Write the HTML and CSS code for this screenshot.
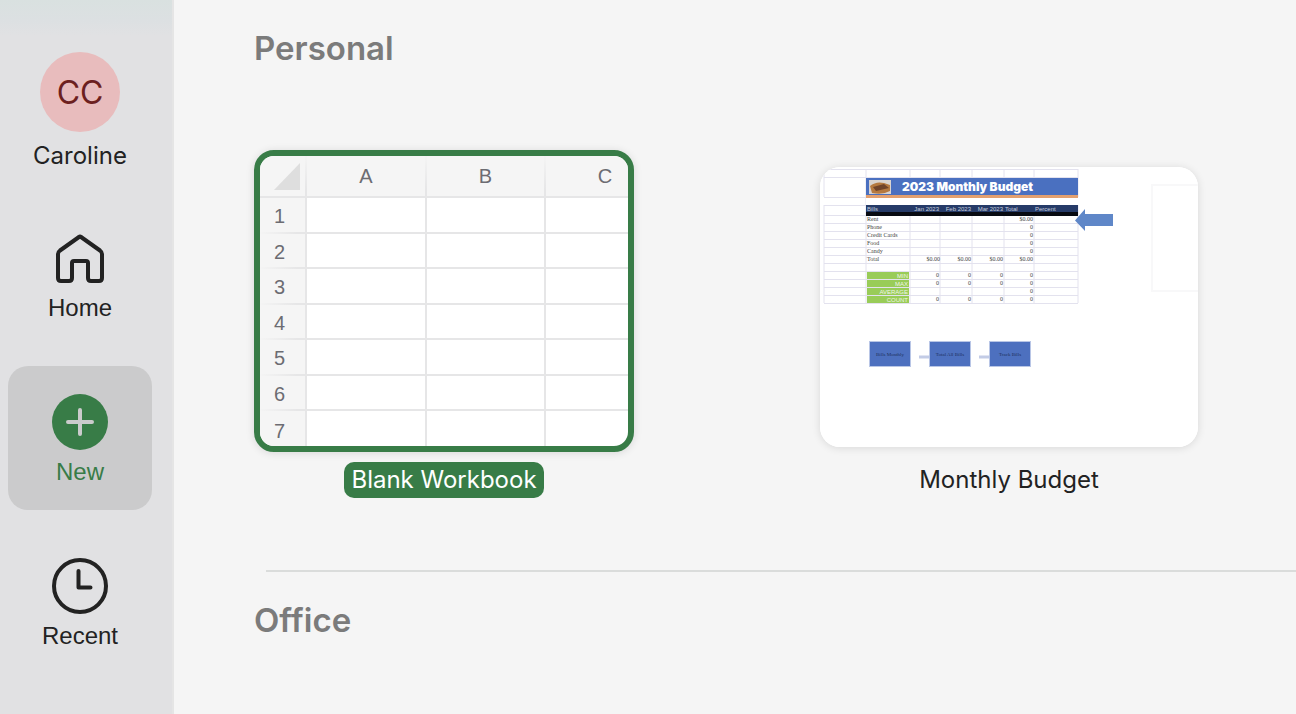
FILE: index.html
```html
<!DOCTYPE html>
<html lang="en">
<head>
<meta charset="utf-8">
<title>New workbook</title>
<link rel="stylesheet" href="styles.css">
</head>
<body>
<div class="app">
  <nav class="sidebar" aria-label="Main">
    <button class="nav-item account" type="button">
      <span class="avatar">CC</span>
      <span class="nav-label account-name">Caroline</span>
    </button>
    <button class="nav-item" type="button">
      <svg class="nav-icon" viewBox="0 0 56 56" aria-hidden="true">
        <path d="M8 20.5 Q6 22 6 24 V48 Q6 51 9 51 H17 Q20 51 20 48 V33 Q20 31 22 31 H34 Q36 31 36 33 V48 Q36 51 39 51 H47 Q50 51 50 48 V24 Q50 22 48 20.5 L29 7 Q28 6 27 7 Z"/>
      </svg>
      <span class="nav-label">Home</span>
    </button>
    <button class="nav-item selected" type="button" aria-current="page">
      <svg class="nav-icon" viewBox="0 0 56 56" aria-hidden="true">
        <circle class="disc" cx="28" cy="28" r="28"/>
        <path class="plus" d="M28 16V40M16 28H40"/>
      </svg>
      <span class="nav-label">New</span>
    </button>
    <button class="nav-item" type="button">
      <svg class="nav-icon" viewBox="0 0 56 56" aria-hidden="true">
        <circle cx="28" cy="28" r="26"/>
        <path d="M26.5 13V29.5H38.5"/>
      </svg>
      <span class="nav-label">Recent</span>
    </button>
  </nav>

  <main class="content">
    <section class="personal">
      <h2>Personal</h2>
      <div class="templates">
        <button class="template chosen" type="button">
          <span class="stage">
            <span class="thumb sheet">
              <span class="row head"><span class="corner"></span><span>A</span><span>B</span><span>C</span></span>
              <span class="row"><span>1</span><span></span><span></span><span></span></span>
              <span class="row"><span>2</span><span></span><span></span><span></span></span>
              <span class="row"><span>3</span><span></span><span></span><span></span></span>
              <span class="row"><span>4</span><span></span><span></span><span></span></span>
              <span class="row"><span>5</span><span></span><span></span><span></span></span>
              <span class="row"><span>6</span><span></span><span></span><span></span></span>
              <span class="row"><span>7</span><span></span><span></span><span></span></span>
            </span>
          </span>
          <span class="caption">Blank Workbook</span>
        </button>
        <button class="template" type="button">
          <span class="stage">
            <svg class="thumb budget" viewBox="0 0 378 280" aria-hidden="true">
              <rect width="378" height="280" fill="#fff"/>
              <path class="lines" d="M4 2.500H258M4 10.500H258M4 30.500H258M4 38.500H258M4 48.500H258M4 56.500H258M4 64.500H258M4 72.500H258M4 80.500H258M4 88.500H258M4 96.500H258M4 104.500H258M4 112.500H258M4 120.500H258M4 128.500H258M4 136.500H258"/>
              <path class="lines" d="M4 2V30M4 38V136M46 2V136M90 2V10M90 38V136M120 2V10M120 38V136M152 2V10M152 38V136M184 2V10M184 38V136M214 2V10M214 38V136M258 2V30M258 38V136"/>
              <rect x="46" y="31" width="212" height="7" fill="#fff"/>
              <rect x="46" y="11" width="212" height="17" fill="#4a70c0"/>
              <rect x="46" y="28" width="212" height="3" fill="#e3a06f"/>
              <rect x="49" y="13" width="22" height="14" fill="#d9d3d0"/>
              <path d="M50 19Q56 14 64 16L70 18V24Q63 28 52 26Z" fill="#b57940"/>
              <path d="M53 20L64 17L69 21L56 24Z" fill="#70432a"/>
              <text class="title" x="82" y="24">2023 Monthly Budget</text>
              <rect x="46" y="38" width="212" height="8" fill="#263b68"/>
              <rect x="46" y="45" width="212" height="4" fill="#080b12"/>
              <g class="header">
                <text x="47" y="44">Bills</text>
                <text class="end" x="119" y="44">Jan 2023</text>
                <text class="end" x="151" y="44">Feb 2023</text>
                <text class="end" x="183" y="44">Mar 2023</text>
                <text x="185" y="44">Total</text>
                <text x="215" y="44">Percent</text>
              </g>
              <g class="cells">
                <text x="47" y="54">Rent</text><text x="47" y="62">Phone</text><text x="47" y="70">Credit Cards</text>
                <text x="47" y="78">Food</text><text x="47" y="86">Candy</text><text x="47" y="94">Total</text>
                <text class="end" x="120" y="94">$0.00</text><text class="end" x="151" y="94">$0.00</text>
                <text class="end" x="183" y="94">$0.00</text><text class="end" x="213" y="94">$0.00</text>
                <text class="end" x="213" y="54">$0.00</text>
                <text class="end" x="213" y="62">0</text><text class="end" x="213" y="70">0</text><text class="end" x="213" y="78">0</text><text class="end" x="213" y="86">0</text>
                <text class="end" x="119" y="110">0</text><text class="end" x="151" y="110">0</text><text class="end" x="183" y="110">0</text><text class="end" x="213" y="110">0</text>
                <text class="end" x="119" y="118">0</text><text class="end" x="151" y="118">0</text><text class="end" x="183" y="118">0</text><text class="end" x="213" y="118">0</text>
                <text class="end" x="213" y="126">0</text>
                <text class="end" x="119" y="134">0</text><text class="end" x="151" y="134">0</text><text class="end" x="183" y="134">0</text><text class="end" x="213" y="134">0</text>
              </g>
              <path d="M47 105H89V112H47ZM47 113H89V120H47ZM47 121H89V128H47ZM47 129H89V136H47Z" fill="#99cc58"/>
              <g class="tags">
                <text class="end" x="88" y="111">MIN</text><text class="end" x="88" y="119">MAX</text>
                <text class="end" x="88" y="127">AVERAGE</text><text class="end" x="88" y="135">COUNT</text>
              </g>
              <path d="M255 53.500L265 42V47H293V59H265V64Z" fill="#5f87c8"/>
              <path d="M378 18H332V124H378" fill="none" stroke="#f8f8f9" stroke-width="2"/>
              <path d="M99 190H110M159 190H170" stroke="#c3cce6" stroke-width="3"/>
              <g fill="#4d70bf" stroke="#b9c6e6">
                <rect x="49.500" y="174.500" width="41" height="25"/>
                <rect x="109.500" y="174.500" width="41" height="25"/>
                <rect x="169.500" y="174.500" width="41" height="25"/>
              </g>
              <g class="boxes">
                <text x="70" y="189">Bills Monthly</text><text x="130" y="189">Total All Bills</text><text x="190" y="189">Track Bills</text>
              </g>
            </svg>
          </span>
          <span class="caption">Monthly Budget</span>
        </button>
      </div>
    </section>
    <section class="office">
      <h2>Office</h2>
    </section>
  </main>
</div>
</body>
</html>
```

FILE: styles.css
```css
* { box-sizing: border-box; }

body {
  margin: 0;
  background: #f5f5f5;
  color: #222;
  font-family: "Liberation Sans", Arial, sans-serif;
}

button {
  border: 0;
  padding: 0;
  background: none;
  color: inherit;
  font: inherit;
}

.app {
  display: flex;
  min-height: 100vh;
}

.sidebar {
  flex: none;
  display: flex;
  flex-direction: column;
  gap: 20px;
  width: 174px;
  padding: 38px 20px 0 8px;
  border-right: 2px solid #e5e5e5;
  background: linear-gradient(#d9e1e0 0, #dce0e2 20px, #e1e1e3 36px);
}

.nav-item {
  display: flex;
  flex-direction: column;
  align-items: center;
  justify-content: center;
  gap: 8px;
  width: 144px;
  height: 144px;
  padding-top: 4px;
  border-radius: 20px;
}

.account {
  gap: 10px;
  padding-top: 2px;
}

.nav-label {
  font-size: 24px;
  line-height: 28px;
}

.account-name {
  font-family: Inter, sans-serif;
}

.avatar {
  width: 80px;
  height: 80px;
  border-radius: 50%;
  background: #e8bcbd;
  color: #6c2020;
  font: 32px/82px Inter, sans-serif;
  text-align: center;
}

.nav-icon {
  width: 56px;
  height: 56px;
  fill: none;
  stroke: #222;
  stroke-width: 4;
  stroke-linecap: round;
  stroke-linejoin: round;
}

.selected {
  background: #cbcbcc;
  color: #387c47;
}

.nav-icon .disc {
  fill: #387c47;
  stroke: none;
}

.nav-icon .plus { stroke: #cbcbcc; }

.content {
  flex: 1;
  min-width: 0;
  overflow: hidden;
  padding: 28px 0 0 80px;
}

h2 {
  margin: 0;
  color: #7b7b7b;
  font: 600 33px/40px Inter, sans-serif;
}

.templates {
  display: flex;
  gap: 185px;
  padding-top: 82px;
}

.template {
  flex: none;
  display: flex;
  flex-direction: column;
  align-items: center;
  gap: 10px;
  width: 380px;
}

.stage {
  display: flex;
  align-items: center;
  justify-content: center;
  width: 100%;
  height: 302px;
}

.thumb {
  overflow: hidden;
  border-radius: 20px;
  background: #fff;
  box-shadow: 0 1px 8px rgba(0, 0, 0, .12);
}

.sheet {
  width: 100%;
  height: 100%;
  border: 6px solid #387c47;
  color: #6c6c72;
  font-size: 20px;
}

.row {
  display: grid;
  grid-template-columns: 47px 120px 119px 120px;
  height: 36px;
}

.row:nth-child(odd) { height: 35px; }

.row > span {
  display: flex;
  align-items: center;
  justify-content: center;
  border-right: 2px solid #e6e6e7;
  border-bottom: 2px solid #e6e6e7;
}

.row > span:first-child {
  padding: 3px 6px 0 0;
  background: #f5f5f5;
  border-image: linear-gradient(90deg, #f5f5f5, #e6e6e7 80%) 2;
}

.row.head { height: 42px; }

.row:last-child { height: 40px; }

.row.head > span {
  background: #f5f5f5;
  border-image: linear-gradient(#f5f5f5, #e6e6e7 80%) 2;
}

.row.head > .corner {
  align-items: flex-end;
  justify-content: flex-end;
  padding: 0 5px 6px 0;
}

.corner::before {
  content: "";
  width: 26px;
  height: 27px;
  background: #dedede;
  clip-path: polygon(100% 0, 100% 100%, 0 100%);
}

.budget {
  width: 378px;
  height: 280px;
  margin-top: 12px;
}

.lines {
  fill: none;
  stroke: #e3e2ee;
}

.budget text {
  font: 6px "Liberation Serif", serif;
  fill: #444;
}

.budget .title {
  font: 900 12px Inter, sans-serif;
  fill: #fff;
}

.budget .header text {
  font-family: "Liberation Sans", sans-serif;
  fill: #c8cede;
}

.budget .tags text {
  font-family: "Liberation Sans", sans-serif;
  fill: #f0f7e5;
}

.budget .boxes text {
  font-size: 5px;
  fill: #1f315e;
  text-anchor: middle;
}

.budget .end { text-anchor: end; }

.caption {
  padding: 0 7px;
  border-radius: 10px;
  font: 24px/36px Inter, sans-serif;
}

.chosen .caption {
  background: #387c47;
  color: #fff;
}

.office {
  margin: 72px 0 0 12px;
  border-top: 2px solid #dadcdb;
}

.office h2 {
  margin: 28px 0 0 -12px;
}
```
